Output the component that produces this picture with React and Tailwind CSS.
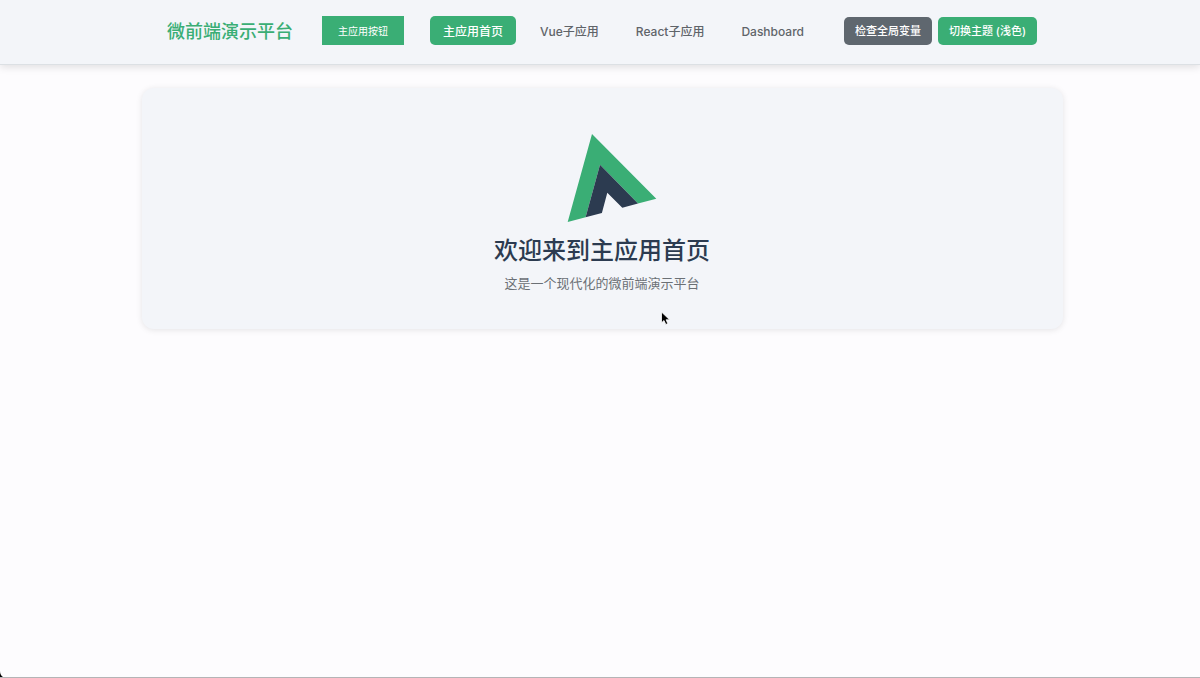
import React from "react";
import { clsx } from "clsx";

const NAV_ITEMS = [
  { id: "home", label: "主应用首页", href: "#/" },
  { id: "vue", label: "Vue子应用", href: "#/vue" },
  { id: "react", label: "React子应用", href: "#/react" },
  { id: "dashboard", label: "Dashboard", href: "#/dashboard" },
];

const Logo = () => (
  <svg className="h-[90px] w-[110px]" viewBox="0 0 110 90" aria-hidden="true">
    <polygon
      points="45,1 109.3,65.8 91,70.6 53,31.7 38.6,84.3 20.7,89"
      fill="#3aae75"
    />
    <polygon
      points="53,31.7 91,70.6 75.3,74.7 60.3,59.7 54.9,79.9 38.6,84.3"
      fill="#2c3b50"
    />
  </svg>
);

const Header = ({ active, onSelect, theme, onToggleTheme }) => (
  <header className="border-b border-[#dce0e4] bg-[#f3f5f9] shadow-[0_2px_8px_rgba(0,0,0,0.12)]">
    <div className="mx-auto flex h-16 w-full max-w-[874px] items-center pb-[3px] pl-1">
      <span className="whitespace-nowrap pt-0.5 text-lg font-medium text-[#3aae75]">
        微前端演示平台
      </span>
      <button className="ml-[29px] h-[29px] whitespace-nowrap bg-[#3aae75] px-4 pt-0.5 text-[10px] text-white">
        主应用按钮
      </button>

      <nav className="ml-[26px] flex items-center gap-[11px]">
        {NAV_ITEMS.map((item) => (
          <a
            key={item.id}
            href={item.href}
            onClick={() => onSelect(item.id)}
            className={clsx(
              "flex h-[29px] items-center whitespace-nowrap rounded-[5px] px-[13px] pt-0.5 text-xs font-medium",
              active === item.id ? "bg-[#3aae75] text-white" : "text-[#5f6469]"
            )}
          >
            {item.label}
          </a>
        ))}
      </nav>

      <div className="ml-auto flex items-center gap-1.5">
        <button className="h-7 whitespace-nowrap rounded-[5px] bg-[#5f676f] px-[11px] pt-0.5 text-[11px] font-medium text-white">
          检查全局变量
        </button>
        <button
          className="h-7 whitespace-nowrap rounded-[5px] bg-[#3aae75] px-[11px] pt-0.5 text-[11px] font-medium text-white"
          onClick={onToggleTheme}
        >
          切换主题 ({theme})
        </button>
      </div>
    </div>
  </header>
);

const App = () => {
  const [active, setActive] = React.useState("home");
  const [theme, setTheme] = React.useState("浅色");

  return (
    <div className="relative flex min-h-screen flex-col border-b border-[#b4b4b6] bg-[#fdfcfe] font-[Inter,'Noto_Sans_CJK_SC',sans-serif]">
      <Header
        active={active}
        onSelect={setActive}
        theme={theme}
        onToggleTheme={() => setTheme(theme === "浅色" ? "深色" : "浅色")}
      />

      <main className="mx-auto w-full max-w-[925px] pt-[23px] pl-1">
        <section className="flex flex-col items-center rounded-xl bg-[#f3f5f9] px-6 pt-[45px] pb-9 shadow-[0_1px_6px_rgba(0,0,0,0.1)]">
          <Logo />
          <h1 className="mt-2.5 text-2xl leading-9 font-medium text-[#2c3b50]">
            欢迎来到主应用首页
          </h1>
          <p className="mt-1 text-[13px] leading-5 text-[#6b7075]">
            这是一个现代化的微前端演示平台
          </p>
        </section>
      </main>

      {/* mouse pointer */}
      <svg
        className="pointer-events-none absolute top-[311px] left-[660px] h-4 w-3"
        viewBox="0 0 12 16"
        aria-hidden="true"
      >
        <path
          d="M1.5 1v10.8l2.5-2.3 1.8 4 2-.9-1.7-3.8h3.5z"
          fill="#000"
          stroke="#fff"
          strokeWidth="0.8"
        />
      </svg>

      {/* rounded window corner */}
      <svg
        className="pointer-events-none absolute bottom-0 left-0 size-1.5"
        viewBox="0 0 6 6"
        aria-hidden="true"
      >
        <path d="M0 0Q0 4 3 6H0z" fill="#000" />
      </svg>
    </div>
  );
};

export default App;
